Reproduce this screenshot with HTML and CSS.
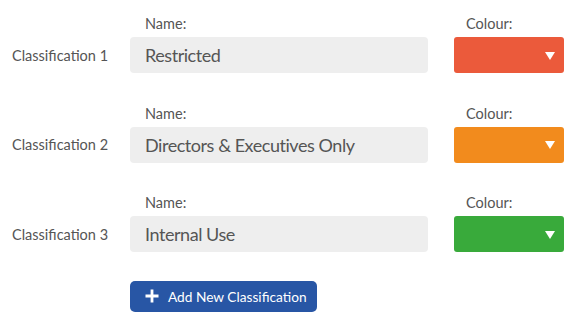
FILE: index.html
```html
<!DOCTYPE html>
<html>
<head>
<meta charset="utf-8">
<link rel="stylesheet" href="styles.css">
</head>
<body>
<div class="page">
  <div class="row">
    <div class="cap cap-name">Name:</div>
    <div class="cap cap-colour">Colour:</div>
    <div class="rowlabel">Classification 1</div>
    <div class="field">Restricted</div>
    <div class="swatch red"><span class="arrow"></span></div>
  </div>
  <div class="row">
    <div class="cap cap-name">Name:</div>
    <div class="cap cap-colour">Colour:</div>
    <div class="rowlabel">Classification 2</div>
    <div class="field">Directors &amp; Executives Only</div>
    <div class="swatch orange"><span class="arrow"></span></div>
  </div>
  <div class="row">
    <div class="cap cap-name">Name:</div>
    <div class="cap cap-colour">Colour:</div>
    <div class="rowlabel">Classification 3</div>
    <div class="field">Internal Use</div>
    <div class="swatch green"><span class="arrow"></span></div>
  </div>
  <div class="actions">
    <button class="addbtn">
      <svg class="plus" width="14" height="14" viewBox="0 0 14 14"><path d="M7 0.5V13.5M0.5 7H13.5" stroke="#fff" stroke-width="2.8" fill="none"/></svg>
      <span>Add New Classification</span>
    </button>
  </div>
</div>
</body>
</html>
```

FILE: styles.css
```css
html, body {
  margin: 0;
  padding: 0;
  background: #ffffff;
}
body {
  font-family: Lato, "Open Sans", sans-serif;
  color: #555555;
}
.page {
  padding: 15px 0 0 12px;
  display: flex;
  flex-direction: column;
  gap: 31.5px;
}
.row {
  display: grid;
  grid-template-columns: 118px 298px 26px 110px;
  grid-template-rows: 18px 36px;
  row-gap: 4px;
}
.cap {
  font-size: 14.5px;
  line-height: 18px;
  color: #555;
  grid-row: 1;
}
.cap-name {
  grid-column: 2;
  padding-left: 15px;
}
.cap-colour {
  grid-column: 4;
  padding-left: 12px;
}
.rowlabel {
  grid-row: 2;
  grid-column: 1;
  align-self: center;
  font-size: 14.5px;
  color: #555;
}
.field {
  grid-row: 2;
  grid-column: 2;
  background: #eeeeee;
  border-radius: 4px;
  font-size: 18px;
  letter-spacing: -0.45px;
  line-height: 36px;
  padding-left: 15px;
  color: #555;
}
.swatch {
  grid-row: 2;
  grid-column: 4;
  border-radius: 3px;
  display: flex;
  align-items: center;
  justify-content: flex-end;
  padding-right: 9px;
}
.red { background: #eb5a3b; }
.orange { background: #f28b1d; }
.green { background: #39aa3b; }
.arrow {
  width: 0;
  height: 0;
  margin-top: 1px;
  border-left: 5.5px solid transparent;
  border-right: 5.5px solid transparent;
  border-top: 8px solid #ffffff;
}
.actions {
  padding-left: 118px;
  margin-top: -3px;
}
.addbtn {
  display: flex;
  align-items: center;
  gap: 9px;
  width: 187px;
  height: 31px;
  padding: 0 0 0 15px;
  border: none;
  border-radius: 5px;
  background: #2856a5;
  color: #ffffff;
  font-family: Lato, "Open Sans", sans-serif;
  font-size: 13.7px;
}
.plus { flex: none; }
```
